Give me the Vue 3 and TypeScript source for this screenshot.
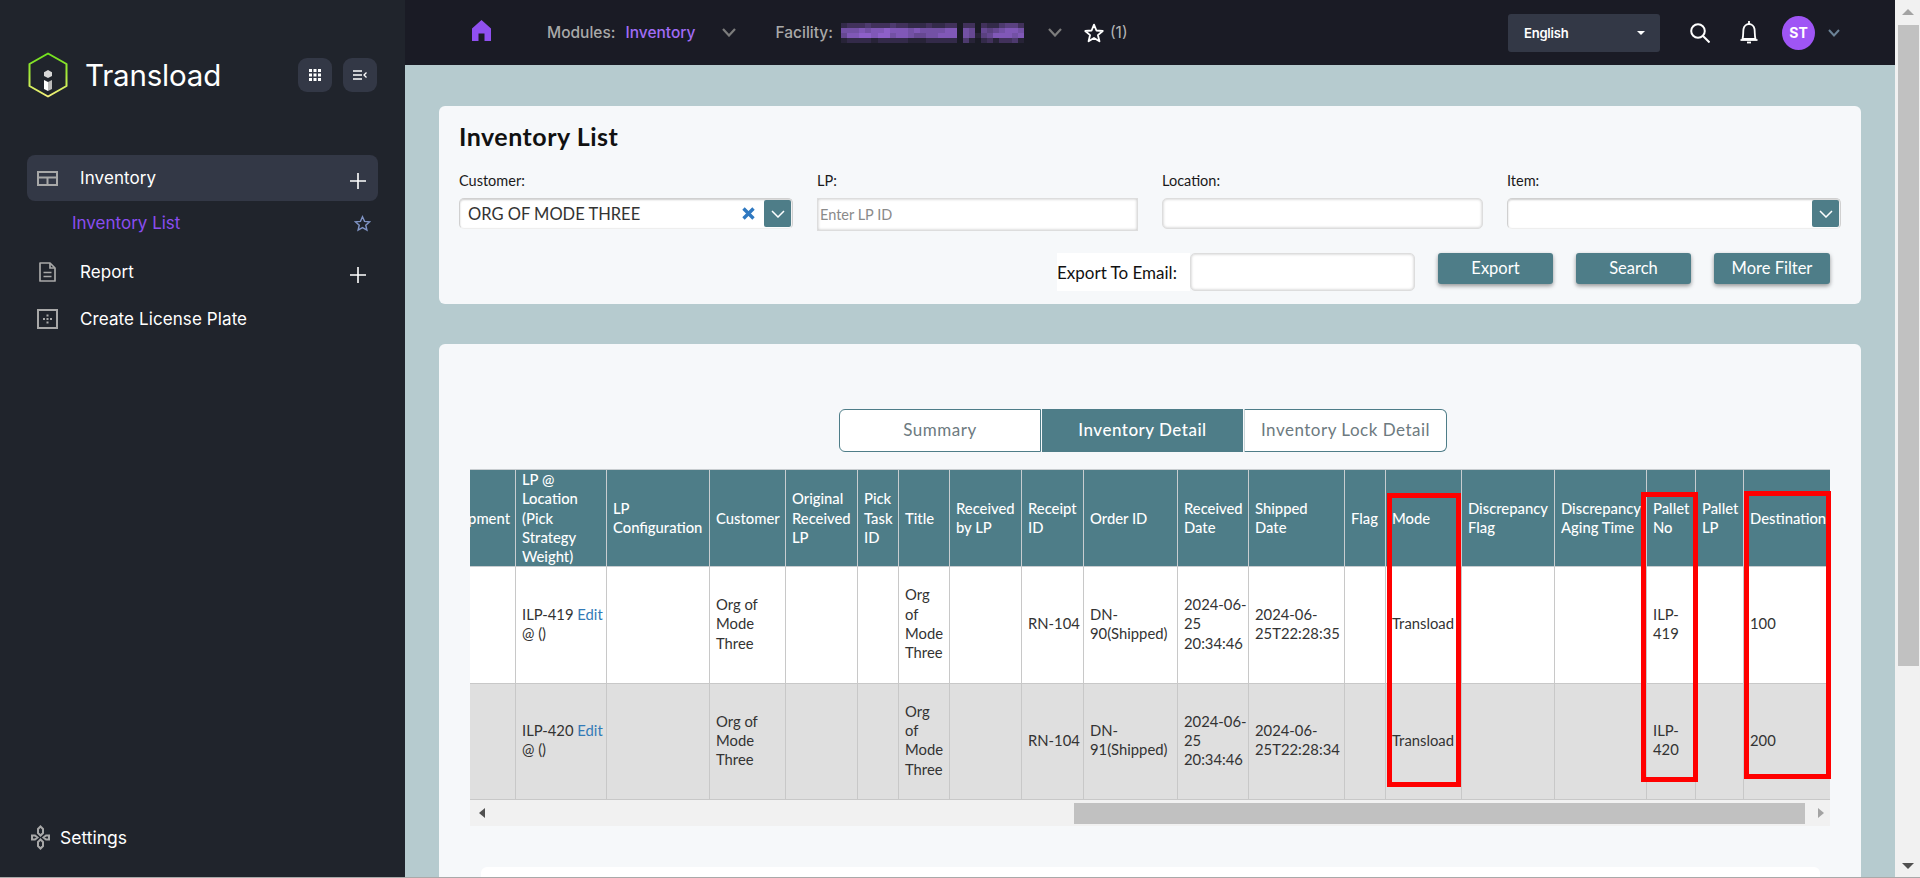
<script setup lang="ts">
interface Col { key: string; label: string; width: number }
const cols: Col[] = [
  { key: 'shipment', label: 'Shipment', width: 85 },
  { key: 'lp', label: 'LP @ Location (Pick Strategy Weight)', width: 91 },
  { key: 'config', label: 'LP Configuration', width: 103 },
  { key: 'customer', label: 'Customer', width: 76 },
  { key: 'orig', label: 'Original Received LP', width: 72 },
  { key: 'pick', label: 'Pick Task ID', width: 41 },
  { key: 'title', label: 'Title', width: 51 },
  { key: 'recvLp', label: 'Received by LP', width: 72 },
  { key: 'receipt', label: 'Receipt ID', width: 62 },
  { key: 'order', label: 'Order ID', width: 94 },
  { key: 'recvDate', label: 'Received Date', width: 71 },
  { key: 'shipDate', label: 'Shipped Date', width: 96 },
  { key: 'flag', label: 'Flag', width: 41 },
  { key: 'mode', label: 'Mode', width: 76 },
  { key: 'dFlag', label: 'Discrepancy Flag', width: 93 },
  { key: 'dAging', label: 'Discrepancy Aging Time', width: 92 },
  { key: 'palletNo', label: 'Pallet No', width: 49 },
  { key: 'palletLp', label: 'Pallet LP', width: 48 },
  { key: 'dest', label: 'Destination', width: 87 },
]
const rows: Record<string, string>[] = [
  { lp: 'ILP-419', customer: 'Org of Mode Three', title: 'Org of Mode Three', receipt: 'RN-104', order: 'DN-90(Shipped)', recvDate: '2024-06-25 20:34:46', shipDate: '2024-06-25T22:28:35', mode: 'Transload', palletNo: 'ILP-419', dest: '100' },
  { lp: 'ILP-420', customer: 'Org of Mode Three', title: 'Org of Mode Three', receipt: 'RN-104', order: 'DN-91(Shipped)', recvDate: '2024-06-25 20:34:46', shipDate: '2024-06-25T22:28:34', mode: 'Transload', palletNo: 'ILP-420', dest: '200' },
]
const mosaic = [
  '233343334332223223303303224553',
  '777878898887877778807606567887',
  '688998997887667788807615688878',
  '122221222221112222204102313341',
]
const cells = mosaic.flatMap((r) => r.split('').map((c) => Number(c) / 10))
</script>

<template>
  <div class="page">
    <div class="shell">
      <aside class="sidebar">
        <div class="brand">
          <svg class="logo" viewBox="0 0 40 46" width="40" height="46">
            <defs>
              <linearGradient id="hex" x1="0" y1="0" x2="0" y2="1">
                <stop offset="0" stop-color="#6fe11c" />
                <stop offset="0.5" stop-color="#a6e83a" />
                <stop offset="1" stop-color="#f5f27a" />
              </linearGradient>
            </defs>
            <path d="M20 1.5 L38.5 12 V34 L20 44.5 L1.5 34 V12 Z" fill="none" stroke="url(#hex)" stroke-width="2" stroke-linejoin="round" />
            <path d="M20 18 L24 20.3 V24 L20 26 L16 24 V20.3 Z" fill="#d8d8d8" />
            <path d="M16 28 L20 30 V39 L16 37 Z" fill="#fff" />
            <path d="M20 30 L24 28 V37 L20 39 Z" fill="#bbb" />
          </svg>
          <span class="brand-name">Transload</span>
          <button class="square-btn first">
            <svg width="12" height="12" viewBox="0 0 12 12" fill="#fff">
              <rect x="0" y="0" width="3" height="3" /><rect x="4.5" y="0" width="3" height="3" /><rect x="9" y="0" width="3" height="3" />
              <rect x="0" y="4.5" width="3" height="3" /><rect x="4.5" y="4.5" width="3" height="3" /><rect x="9" y="4.5" width="3" height="3" />
              <rect x="0" y="9" width="3" height="3" /><rect x="4.5" y="9" width="3" height="3" /><rect x="9" y="9" width="3" height="3" />
            </svg>
          </button>
          <button class="square-btn">
            <svg width="14" height="10" viewBox="0 0 14 10" fill="none" stroke="#fff" stroke-width="1.3">
              <path d="M0 1H9M0 5H9M0 9H9" />
              <path d="M13.5 2.5 L11 5 L13.5 7.5" />
            </svg>
          </button>
        </div>

        <nav class="nav">
          <div class="nav-item active">
            <svg class="nav-icon" width="21" height="15" viewBox="0 0 21 15" fill="none" stroke="#a8a8a8" stroke-width="2">
              <rect x="1" y="1" width="19" height="13" /><path d="M1 6.5H20M10.5 6.5V14" />
            </svg>
            <span class="nav-text">Inventory</span>
            <svg class="plus" width="16" height="16" viewBox="0 0 16 16" stroke="#fff" stroke-width="1.6"><path d="M8 0V16M0 8H16" /></svg>
          </div>
          <div class="sub-item">
            <span class="sub-text">Inventory List</span>
            <svg width="17" height="17" viewBox="0 0 24 24" fill="none" stroke="#7f93c4" stroke-width="2"><path d="M12 2.5 L14.9 9 L22 9.7 L16.6 14.4 L18.2 21.4 L12 17.8 L5.8 21.4 L7.4 14.4 L2 9.7 L9.1 9 Z" /></svg>
          </div>
          <div class="nav-item report">
            <svg class="nav-icon" width="21" height="20" viewBox="0 0 21 20" fill="none" stroke="#a8a8a8" stroke-width="1.7">
              <path d="M3 1H13L18 6V19H3Z" stroke-linejoin="round" /><path d="M13 1V6H18M6.5 10.5H14.5M6.5 14.5H14.5" />
            </svg>
            <span class="nav-text">Report</span>
            <svg class="plus" width="16" height="16" viewBox="0 0 16 16" stroke="#fff" stroke-width="1.6"><path d="M8 0V16M0 8H16" /></svg>
          </div>
          <div class="nav-item create">
            <svg class="nav-icon" width="21" height="20" viewBox="0 0 21 20" fill="none" stroke="#a8a8a8" stroke-width="2">
              <rect x="1" y="1" width="19" height="18" />
              <g fill="#a8a8a8" stroke="none">
                <rect x="9.5" y="5.5" width="2" height="2" /><rect x="9.5" y="9" width="2" height="2" /><rect x="9.5" y="12.5" width="2" height="2" />
                <rect x="6" y="9" width="2" height="2" /><rect x="13" y="9" width="2" height="2" />
              </g>
            </svg>
            <span class="nav-text">Create License Plate</span>
          </div>
        </nav>

        <div class="settings">
          <svg width="19" height="25" viewBox="0 0 19 25" fill="none" stroke="#a8a8a8" stroke-width="2">
            <path d="M9.5 1.5 L12 4 V8 L9.5 10.5 L7 8 V4 Z" />
            <path d="M9.5 14.5 L12 17 V21 L9.5 23.5 L7 21 V17 Z" />
            <path d="M1 10.5 H4 L6.5 12.5 L4 14.5 H1 Z" />
            <path d="M18 10.5 H15 L12.5 12.5 L15 14.5 H18 Z" />
          </svg>
          <span>Settings</span>
        </div>
      </aside>

      <div class="main">
        <header class="topbar">
          <svg class="home" width="19" height="21" viewBox="0 0 19 21" fill="#9050f0">
            <path d="M9.5 0 L19 8.5 V21 H12.5 V13.5 H6.5 V21 H0 V8.5 Z" />
          </svg>
          <span class="tb-label modules">Modules:</span>
          <span class="tb-value">Inventory</span>
          <svg class="chev c1" width="14" height="9" viewBox="0 0 14 9" fill="none" stroke="#7c7c7c" stroke-width="2.2"><path d="M1 1 L7 7.5 L13 1" /></svg>
          <span class="tb-label facility">Facility:</span>
          <div class="mosaic">
            <i v-for="(a, i) in cells" :key="i" :style="{ opacity: a }"></i>
          </div>
          <svg class="chev c2" width="14" height="9" viewBox="0 0 14 9" fill="none" stroke="#7c7c7c" stroke-width="2.2"><path d="M1 1 L7 7.5 L13 1" /></svg>
          <svg class="fav" width="20" height="20" viewBox="0 0 24 24" fill="none" stroke="#fff" stroke-width="2.2"><path d="M12 2 L14.9 9 L22.5 9.6 L16.7 14.5 L18.5 22 L12 18 L5.5 22 L7.3 14.5 L1.5 9.6 L9.1 9 Z" stroke-linejoin="round" /></svg>
          <span class="tb-count">(1)</span>

          <div class="lang"><span>English</span><i class="caret"></i></div>
          <svg class="search" width="20" height="20" viewBox="0 0 20 20" fill="none" stroke="#fff" stroke-width="2"><circle cx="8" cy="8" r="6.8" /><path d="M13 13 L19.5 19.5" /></svg>
          <svg class="bell" width="18" height="24" viewBox="0 0 18 24" fill="none" stroke="#fff" stroke-width="1.8">
            <path d="M2.5 19 C3.5 16 3 12 3.5 9 C4 6 6.5 4 9 4 C11.5 4 14 6 14.5 9 C15 12 14.5 16 15.5 19 Z" stroke-linejoin="round" />
            <path d="M0.5 20H17.5" /><path d="M9 1V4" /><path d="M7 22.5H11" />
          </svg>
          <div class="avatar">ST</div>
          <svg class="chev c3" width="12" height="8" viewBox="0 0 12 8" fill="none" stroke="#6b8296" stroke-width="2"><path d="M1 1 L6 6.5 L11 1" /></svg>
        </header>

        <div class="content">
          <section class="filter-card">
            <h1 class="title">Inventory List</h1>
            <div class="fields">
              <div class="field">
                <label>Customer:</label>
                <div class="select">
                  <span class="sel-value">ORG OF MODE THREE</span>
                  <svg class="clear" width="13" height="13" viewBox="0 0 13 13" stroke="#2f78c0" stroke-width="3.4"><path d="M1.5 1.5 L11.5 11.5M11.5 1.5 L1.5 11.5" /></svg>
                  <span class="sel-btn"><svg width="14" height="8" viewBox="0 0 14 8" fill="none" stroke="#fff" stroke-width="1.5"><path d="M1 1 L7 7 L13 1" /></svg></span>
                </div>
              </div>
              <div class="field">
                <label>LP:</label>
                <input class="input square" placeholder="Enter LP ID" />
              </div>
              <div class="field">
                <label>Location:</label>
                <input class="input" />
              </div>
              <div class="field">
                <label>Item:</label>
                <div class="select">
                  <span class="sel-value"></span>
                  <span class="sel-btn"><svg width="14" height="8" viewBox="0 0 14 8" fill="none" stroke="#fff" stroke-width="1.5"><path d="M1 1 L7 7 L13 1" /></svg></span>
                </div>
              </div>
            </div>
            <div class="export-row">
              <label class="export-label">Export To Email:</label>
              <input class="input email" />
              <button class="btn">Export</button>
              <button class="btn">Search</button>
              <button class="btn wide">More Filter</button>
            </div>
          </section>

          <section class="list-card">
            <div class="tabs">
              <div class="tab left">Summary</div>
              <div class="tab on">Inventory Detail</div>
              <div class="tab right">Inventory Lock Detail</div>
            </div>

            <div class="table-area">
              <div class="table-clip">
                <table class="grid">
                  <colgroup><col v-for="c in cols" :key="c.key" :style="{ width: c.width + 'px' }" /></colgroup>
                  <thead>
                    <tr><th v-for="c in cols" :key="c.key" :class="'h-' + c.key">{{ c.label }}</th></tr>
                  </thead>
                  <tbody>
                    <tr v-for="(r, i) in rows" :key="i" :class="{ alt: i === 1 }">
                      <td v-for="c in cols" :key="c.key" :class="'d-' + c.key">
                        <template v-if="c.key === 'lp'">{{ r.lp }} <a class="edit">Edit</a><br />@ ()</template>
                        <template v-else>{{ r[c.key] }}</template>
                      </td>
                    </tr>
                  </tbody>
                </table>
              </div>
              <div class="hbar">
                <i class="arrow-left"></i>
                <span class="hthumb"></span>
                <i class="arrow-right"></i>
              </div>
              <div class="mark mark-mode"></div>
              <div class="mark mark-pallet"></div>
              <div class="mark mark-dest"></div>
            </div>

            <div class="next-card"></div>
          </section>
        </div>
      </div>

      <div class="vbar">
        <i class="arrow-up"></i>
        <span class="vthumb"></span>
        <i class="arrow-down"></i>
      </div>
    </div>
    <div class="edge"></div>
  </div>
</template>

<style>
html, body { margin: 0; height: 100%; overflow: hidden; }
</style>

<style scoped>
.page { display: flex; flex-direction: column; height: 878px; font-family: Lato, "Open Sans", sans-serif; }
.shell { display: flex; flex: 1; min-height: 0; }
.edge { height: 1px; background: #a9a9a9; }

.sidebar { width: 405px; flex: none; box-sizing: border-box; background: #20242c; padding: 0 27px; display: flex; flex-direction: column; font-family: Inter, sans-serif; color: #fff; }
.brand { display: flex; align-items: center; margin-top: 58px; height: 34px; padding-right: 1px; }
.logo { margin-left: 1px; flex: none; }
.brand-name { margin-left: 17px; font-size: 29.5px; font-weight: 400; letter-spacing: -.2px; flex: 1; }
.square-btn { width: 34px; height: 34px; border: 0; padding: 0; border-radius: 9px; background: #333846; display: flex; align-items: center; justify-content: center; }
.square-btn.first { margin-right: 11px; }
.nav { margin-top: 63px; }
.nav-item { display: flex; align-items: center; height: 46px; padding: 0 12px 0 10px; }
.nav-item.active { background: #333846; border-radius: 8px; }
.nav-item.report { margin-top: 4px; }
.nav-item.create { margin-top: 1px; }
.nav-icon { flex: none; }
.nav-text { font-size: 17px; letter-spacing: .1px; flex: 1; margin-left: 22px; }
.plus { flex: none; margin-top: 5px; }
.sub-item { display: flex; align-items: center; justify-content: space-between; height: 44px; padding: 0 7px 0 45px; }
.sub-text { color: #8a4df0; font-size: 17px; }
.settings { margin-top: auto; margin-bottom: 27px; margin-left: 4px; display: flex; align-items: center; gap: 10px; font-size: 17.5px; height: 25px; }

.main { flex: 1; min-width: 0; display: flex; flex-direction: column; }
.topbar { height: 65px; flex: none; background: #1a1b25; display: flex; align-items: center; padding: 0 55px 0 67px; font-family: Inter, sans-serif; font-size: 15.5px; }
.home { flex: none; margin-top: -5px; }
.tb-label { color: #a9a9a9; font-weight: 500; }
.modules { margin-left: 56px; }
.tb-value { color: #a06cf5; font-weight: 500; margin-left: 10px; }
.chev { flex: none; }
.c1 { margin-left: 27px; }
.facility { margin-left: 39px; }
.mosaic { margin-left: 8px; width: 183px; flex: none; display: grid; grid-template-columns: repeat(30, 6.1px); grid-auto-rows: 5px; }
.mosaic i { background: #9a68dc; display: block; }
.c2 { margin-left: 24px; }
.fav { margin-left: 22px; flex: none; }
.tb-count { color: #b5b5b5; margin-left: 6px; }
.lang { margin-left: auto; width: 152px; height: 38px; box-sizing: border-box; background: #333846; border-radius: 3px; display: flex; align-items: center; justify-content: space-between; padding: 0 15px 0 16px; color: #fff; font-weight: 600; font-size: 13px; letter-spacing: -.2px; }
.caret { width: 0; height: 0; border: 4px solid transparent; border-top: 4px solid #fff; margin-top: 4px; }
.search { margin-left: 30px; flex: none; }
.bell { margin-left: 30px; flex: none; margin-top: -2px; }
.avatar { margin-left: 24px; width: 33px; height: 34px; border-radius: 50%; background: #9f55f5; color: #fff; font-weight: 700; font-size: 14px; display: flex; align-items: center; justify-content: center; flex: none; }
.c3 { margin-left: 13px; }

.content { flex: 1; min-height: 0; background: #b6cbcf; padding: 41px 34px 0; display: flex; flex-direction: column; color: #222; }
.filter-card { height: 198px; flex: none; box-sizing: border-box; background: #f6f8fa; border-radius: 6px; padding: 15px 20px 0; }
.title { margin: 0; font-size: 25px; letter-spacing: .5px; line-height: 30px; font-weight: 700; color: #111; }
.fields { display: grid; grid-template-columns: 334px 321px 321px 334px; column-gap: 24px; margin-top: 20px; height: 61px; }
.field label { display: block; font-size: 14.5px; line-height: 20px; margin-bottom: 7px; color: #1a1a1a; }
.select { height: 31px; box-sizing: border-box; background: #fff; border: 1px solid #d0d0d0; border-bottom-color: #eee; border-radius: 5px; box-shadow: inset 0 1px 2px rgba(0,0,0,.2); display: flex; align-items: center; padding-right: 1px; }
.sel-value { flex: 1; padding-left: 8px; font-size: 16.5px; color: #333; }
.clear { margin-right: 9px; flex: none; }
.sel-btn { width: 27px; height: 27px; background: #4e7d88; border-radius: 2px; display: flex; align-items: center; justify-content: center; flex: none; }
.input { width: 100%; height: 31px; box-sizing: border-box; background: #fff; border: 1px solid #ddd; border-radius: 5px; box-shadow: inset 0 0 3px rgba(0,0,0,.25); outline: none; font-family: inherit; padding: 0 2px; font-size: 14.5px; display: block; }
.input.square { height: 33px; border-radius: 0; margin-top: 1px; }
.input::placeholder { color: #8a8a8a; }
.export-row { display: flex; justify-content: flex-end; align-items: flex-start; margin-top: 21px; margin-right: 11px; }
.export-label { width: 133px; height: 38px; background: #fff; display: flex; align-items: center; font-size: 17px; color: #111; box-sizing: border-box; white-space: nowrap; }
.input.email { width: 225px; height: 38px; }
.btn { width: 115px; height: 31px; margin-left: 23px; border: 0; border-radius: 3px; background: #4e7d88; color: #fff; font-family: inherit; font-size: 16.5px; padding: 0 0 2px; box-shadow: 0 2px 4px rgba(0,0,0,.4); }
.btn.wide { width: 116px; }

.list-card { flex: 1; min-height: 0; margin-top: 40px; background: #f6f8fa; border-radius: 6px 6px 0 0; padding-top: 65px; overflow: hidden; display: flex; flex-direction: column; }
.tabs { display: flex; margin-left: 400px; height: 43px; flex: none; font-size: 17px; letter-spacing: .5px; }
.tab { box-sizing: border-box; display: flex; align-items: center; justify-content: center; background: #fff; color: #6d7a80; border: 1px solid #4e7d88; padding-bottom: 3px; }
.tab.left { width: 202px; border-radius: 6px 0 0 6px; margin-right: 1px; }
.tab.on { width: 201px; background: #4e7d88; color: #fff; font-weight: 500; margin-right: 1px; }
.tab.right { width: 203px; border-radius: 0 6px 6px 0; border-left-color: #cbd5d8; }

.table-area { position: relative; margin: 17px 31px 0; flex: none; }
.table-clip { overflow: hidden; }
.grid { border-collapse: collapse; table-layout: fixed; width: 1400px; margin-left: -40px; font-size: 14.8px; line-height: 19.3px; color: #333; }
.grid th { height: 97px; box-sizing: border-box; background: #4e7d88; color: #fff; font-weight: 500; text-align: left; padding: 0 2px 0 6px; border: 1px solid #c8cdd0; font-size: 14.8px; }
.grid th.h-shipment { text-align: right; padding-right: 5px; }
.grid th.h-shipDate { padding-right: 14px; }
.grid td { height: 117px; box-sizing: border-box; background: #fff; padding: 0 4px 3px 6px; border: 1px solid #c8c8c8; }
.grid td.d-lp, .grid td.d-receipt, .grid td.d-recvDate { padding-right: 0; }
.grid td.d-title { padding-right: 6px; }
.grid tr.alt td { background: #dfdfdf; height: 116px; }
.edit { color: #337ab7; }
.hbar { height: 26px; background: #f1f1f1; display: flex; align-items: center; position: relative; }
.hthumb { position: absolute; left: 604px; top: 3px; width: 731px; height: 21px; background: #c1c1c1; }
.arrow-left { margin-left: 9px; width: 0; height: 0; border: 5px solid transparent; border-left: 0; border-right: 6px solid #505050; }
.arrow-right { margin-left: auto; margin-right: 6px; width: 0; height: 0; border: 5px solid transparent; border-right: 0; border-left: 6px solid #a3a3a3; }
.mark { position: absolute; box-sizing: border-box; border: 5px solid #f00; pointer-events: none; }
.mark-mode { left: 917px; top: 24px; width: 74px; height: 294px; }
.mark-pallet { left: 1171px; top: 23px; width: 57px; height: 290px; }
.mark-dest { left: 1274px; top: 22px; width: 87px; height: 288px; }
.next-card { margin: 41px 41px 0 42px; height: 60px; background: #fff; border-radius: 6px 6px 0 0; flex: none; }

.vbar { width: 25px; flex: none; background: #f1f1f1; position: relative; display: flex; flex-direction: column; align-items: center; }
.vthumb { position: absolute; left: 3px; top: 25px; width: 21px; height: 641px; background: #c1c1c1; }
.arrow-up { margin-top: 9px; width: 0; height: 0; border: 6px solid transparent; border-top: 0; border-bottom: 6px solid #a3a3a3; }
.arrow-down { margin-top: auto; margin-bottom: 8px; width: 0; height: 0; border: 6px solid transparent; border-bottom: 0; border-top: 6px solid #505050; }
</style>
